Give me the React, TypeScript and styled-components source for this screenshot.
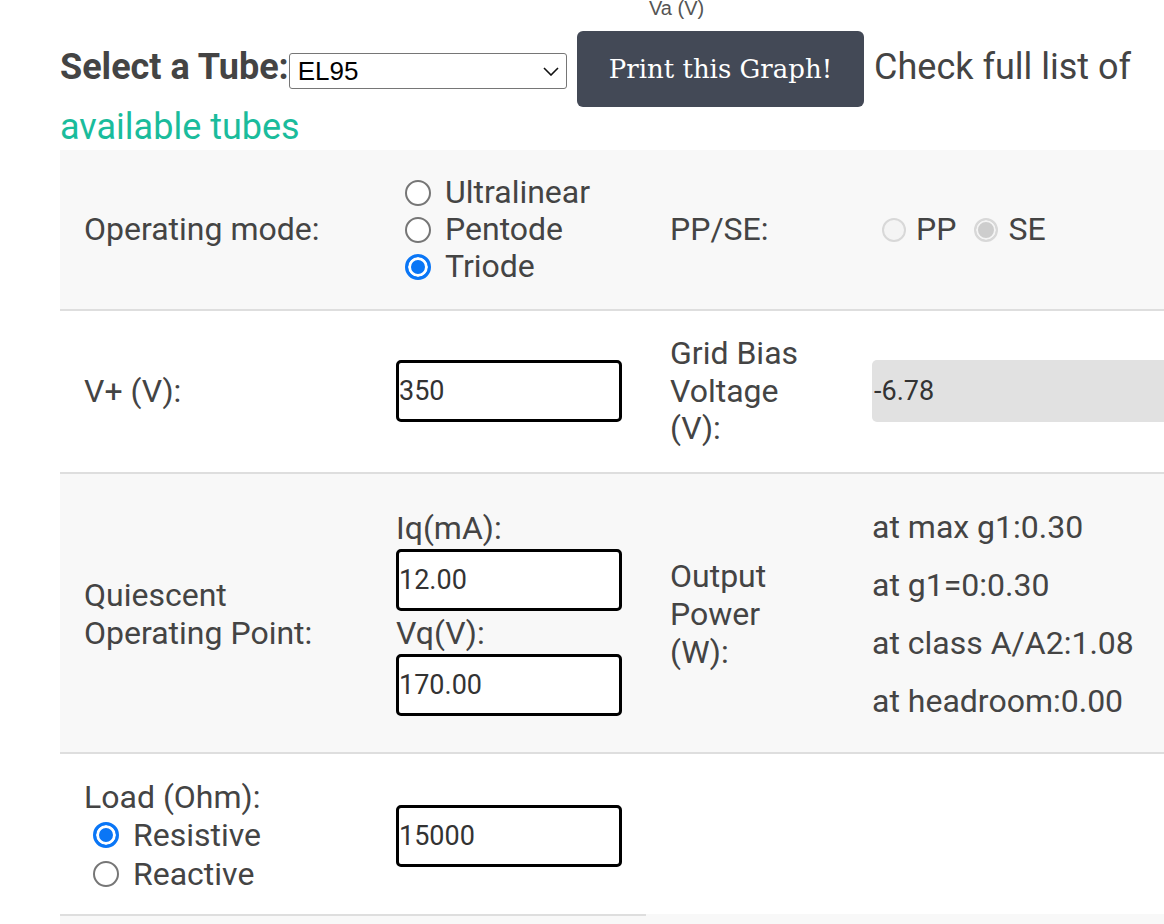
import React from "react";
import styled, { createGlobalStyle, css } from "styled-components";

const GlobalStyle = createGlobalStyle`
  html, body { margin: 0; padding: 0; background: #fff; overflow: hidden; }
  body { font-family: Roboto, "Noto Sans", Arial, sans-serif; color: #444; }
  * { box-sizing: border-box; }
`;

const Page = styled.div`
  width: 1164px;
  height: 924px;
  overflow: hidden;
  padding-left: 60px;
`;

const AxisLabel = styled.div`
  font-family: "Liberation Sans", Arial, sans-serif;
  font-size: 20px;
  line-height: 23px;
  color: #555;
  margin-top: -3px;
  padding-left: 589px;
`;

const Header = styled.div`
  width: 1104px;
  margin-top: 11px;
  font-size: 36px;
  line-height: 40px;
  color: #444;
`;

const HeaderLabel = styled.label`
  font-weight: 700;
`;

const SelectWrap = styled.span`
  position: relative;
  display: inline-block;
  vertical-align: middle;
  width: 278px;
  height: 36px;
  margin-top: 4px;
`;

const TubeSelect = styled.select`
  appearance: none;
  -webkit-appearance: none;
  display: block;
  width: 100%;
  height: 100%;
  margin: 0;
  border: 1px solid #767676;
  border-radius: 3px;
  background: #fff;
  color: #000;
  font-family: "Liberation Sans", Arial, sans-serif;
  font-size: 26px;
  padding: 0 30px 0 8px;
  outline: none;
`;

const Chevron = styled.svg`
  position: absolute;
  right: 8px;
  top: 14px;
  width: 16px;
  height: 9px;
  pointer-events: none;
`;

const PrintButton = styled.button`
  display: inline-block;
  vertical-align: middle;
  height: 76px;
  margin: 0 10px;
  padding: 0 32px;
  border: none;
  border-radius: 6px;
  background: #434956;
  color: #fff;
  font-family: "DejaVu Serif", "Liberation Serif", serif;
  font-size: 26px;
  cursor: pointer;
`;

const TubesLink = styled.a`
  color: #1abc9c;
  text-decoration: none;
`;

const Table = styled.div`
  margin-top: 3px;
  width: 1200px;
  font-size: 32px;
  line-height: 37.5px;
  color: #444;
`;

const Row = styled.div<{ $shade?: boolean; $rule?: boolean; $padBottom?: number }>`
  display: grid;
  grid-template-columns: 312px 274px 202px 1fr;
  align-items: center;
  padding: 24px 0 ${(p) => p.$padBottom ?? 24}px;
  background: ${(p) => (p.$shade ? "#f8f8f8" : "#fff")};
  ${(p) =>
    p.$rule &&
    css`
      border-top: 2px solid #dedede;
    `}
`;

const TailRow = styled.div`
  display: grid;
  grid-template-columns: 586px 1fr;
  height: 40px;
  background: #f8f8f8;
`;

const TailRule = styled.div`
  border-top: 2px solid #dedede;
`;

const Cell = styled.div`
  padding: 0 24px;
`;

const RadioStack = styled.div<{ $line?: number }>`
  display: flex;
  flex-direction: column;
  line-height: ${(p) => p.$line ?? 37}px;
`;

const RadioLine = styled.label<{ $indent?: number }>`
  display: flex;
  align-items: center;
  gap: 14px;
  padding-left: ${(p) => p.$indent ?? 9}px;
`;

const Radio = styled.input.attrs({ type: "radio" })`
  appearance: none;
  -webkit-appearance: none;
  flex: none;
  width: 26px;
  height: 26px;
  margin: 0;
  border-radius: 50%;
  border: 2px solid #767676;
  background: #fff;
  &:checked {
    border: 3px solid #0a76f6;
    background: #0a76f6;
    box-shadow: inset 0 0 0 3px #fff;
  }
  &:disabled {
    width: 24px;
    height: 24px;
    border: 2px solid #d8d8d8;
    background: #f4f4f4;
  }
  &:disabled:checked {
    border: 2px solid #d8d8d8;
    background: #cdcdcd;
    box-shadow: inset 0 0 0 2px #f4f4f4;
  }
`;

const InlineRadios = styled.div`
  display: flex;
  align-items: center;
  padding-left: 10px;
  gap: 18px;
`;

const InlineOption = styled.label`
  display: flex;
  align-items: center;
  gap: 10px;
`;

const ValueInput = styled.input`
  display: block;
  width: 226px;
  height: 62px;
  margin: 0;
  border: 3px solid #000;
  border-radius: 5px;
  background: #fff;
  color: #333;
  font-family: Roboto, Arial, sans-serif;
  font-size: 27px;
  padding: 0;
  outline: none;
`;

const ReadInput = styled.input`
  display: block;
  width: 100%;
  height: 62px;
  margin: 0;
  border: none;
  border-radius: 5px;
  background: #e1e1e1;
  color: #333;
  font-family: Roboto, Arial, sans-serif;
  font-size: 27px;
  padding: 0 2px;
  outline: none;
`;

const FieldStack = styled.div`
  display: flex;
  flex-direction: column;
`;

const FieldLabel = styled.div`
  line-height: 38px;
`;

const StackedInput = styled(ValueInput)`
  margin: 2px 0 3px;
`;

const Label = styled.div<{ $line?: number }>`
  line-height: ${(p) => p.$line ?? 37.5}px;
`;

const PowerList = styled.div`
  display: flex;
  flex-direction: column;
`;

const PowerLine = styled.div`
  line-height: 58px;
  white-space: nowrap;
`;

export default function App() {
  return (
    <>
      <GlobalStyle />
      <Page>
        <AxisLabel>Va (V)</AxisLabel>
        <Header>
          <HeaderLabel htmlFor="tube">Select a Tube:</HeaderLabel>
          <SelectWrap>
            <TubeSelect id="tube" defaultValue="EL95">
              <option value="EL95">EL95</option>
            </TubeSelect>
            <Chevron viewBox="0 0 16 9" fill="none">
              <path d="M1 1l7 7 7-7" stroke="#111" strokeWidth="1.6" />
            </Chevron>
          </SelectWrap>
          <PrintButton type="button">Print this Graph!</PrintButton>
          Check full list of <TubesLink href="#">available tubes</TubesLink>
        </Header>
        <Table>
          <Row $shade>
            <Cell>Operating mode:</Cell>
            <Cell>
              <RadioStack>
                <RadioLine>
                  <Radio name="mode" />
                  Ultralinear
                </RadioLine>
                <RadioLine>
                  <Radio name="mode" />
                  Pentode
                </RadioLine>
                <RadioLine>
                  <Radio name="mode" defaultChecked />
                  Triode
                </RadioLine>
              </RadioStack>
            </Cell>
            <Cell>PP/SE:</Cell>
            <Cell>
              <InlineRadios>
                <InlineOption>
                  <Radio name="ppse" disabled />
                  PP
                </InlineOption>
                <InlineOption>
                  <Radio name="ppse" disabled defaultChecked />
                  SE
                </InlineOption>
              </InlineRadios>
            </Cell>
          </Row>
          <Row $rule>
            <Cell>V+ (V):</Cell>
            <Cell>
              <ValueInput defaultValue="350" />
            </Cell>
            <Cell>
              <Label>Grid Bias Voltage (V):</Label>
            </Cell>
            <Cell>
              <ReadInput readOnly defaultValue="-6.78" />
            </Cell>
          </Row>
          <Row $shade $rule $padBottom={22}>
            <Cell>
              <Label $line={38}>Quiescent Operating Point:</Label>
            </Cell>
            <Cell>
              <FieldStack>
                <FieldLabel>Iq(mA):</FieldLabel>
                <StackedInput defaultValue="12.00" />
                <FieldLabel>Vq(V):</FieldLabel>
                <StackedInput defaultValue="170.00" />
              </FieldStack>
            </Cell>
            <Cell>
              <Label $line={38}>Output Power (W):</Label>
            </Cell>
            <Cell>
              <PowerList>
                <PowerLine>at max g1:0.30</PowerLine>
                <PowerLine>at g1=0:0.30</PowerLine>
                <PowerLine>at class A/A2:1.08</PowerLine>
                <PowerLine>at headroom:0.00</PowerLine>
              </PowerList>
            </Cell>
          </Row>
          <Row $rule $padBottom={20}>
            <Cell>
              <RadioStack $line={39}>
                <Label $line={38}>Load (Ohm):</Label>
                <RadioLine>
                  <Radio name="load" defaultChecked />
                  Resistive
                </RadioLine>
                <RadioLine>
                  <Radio name="load" />
                  Reactive
                </RadioLine>
              </RadioStack>
            </Cell>
            <Cell>
              <ValueInput defaultValue="15000" />
            </Cell>
            <Cell />
            <Cell />
          </Row>
          <TailRow>
            <TailRule />
          </TailRow>
        </Table>
      </Page>
    </>
  );
}
